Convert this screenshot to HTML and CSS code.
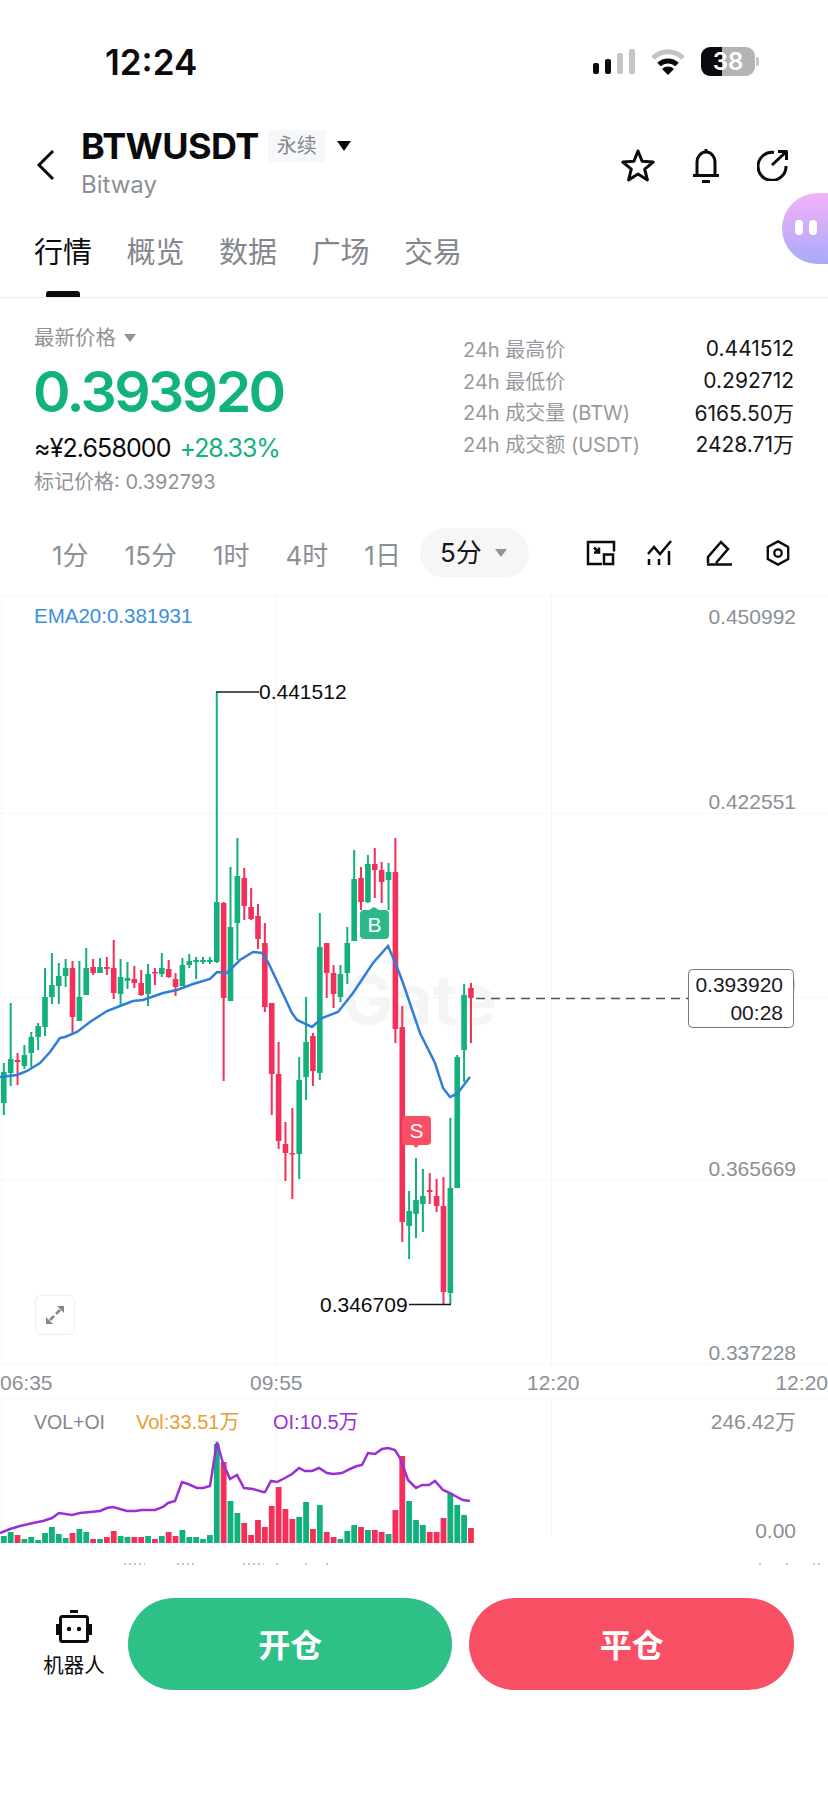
FILE: index.html
```html
<!DOCTYPE html>
<html lang="zh-CN">
<head>
    <meta charset="UTF-8">
    <meta name="viewport" content="width=device-width, initial-scale=1.0">
    <title>BTWUSDT 永续</title>
    <link rel="stylesheet" href="styles.css">
</head>
<body>
    <div class="page">
        <div class="status-bar">
            <span class="clock">12:24</span>
            <div class="status-icons">
                <div class="signal">
                    <i class="bar-1"></i><i class="bar-2"></i><i class="bar-3"></i><i class="bar-4"></i>
                </div>
                <svg class="wifi" viewBox="0 0 34 27">
                    <path class="wifi-off" d="M2 10A21 21 0 0 1 32 10"/>
                    <path class="wifi-on" d="M8 16.5A13 13 0 0 1 26 16.5"/>
                    <path class="wifi-dot" d="M17 27L11 21A8.5 8.5 0 0 1 23 21Z"/>
                </svg>
                <div class="battery">38</div>
            </div>
        </div>

        <div class="nav">
            <svg class="back" viewBox="0 0 20 32"><path d="M17 2L3 16L17 30"/></svg>
            <div class="pair">
                <div class="pair-top">
                    <span class="pair-name">BTWUSDT</span>
                    <span class="pair-tag">永续</span>
                    <span class="pair-caret"></span>
                </div>
                <div class="pair-sub">Bitway</div>
            </div>
            <div class="nav-icons">
                <svg class="nav-star" viewBox="0 0 34 33"><polygon points="17,2 21.1,12.3 32.2,13.1 23.7,20.2 26.4,30.9 17,25 7.6,30.9 10.3,20.2 1.8,13.1 12.9,12.3"/></svg>
                <svg class="nav-bell" viewBox="0 0 28 35"><path d="M5 27V14a9 10 0 0 1 18 0V27M1 27.5H27M14 1V4M10 33.5H18"/></svg>
                <svg class="nav-share" viewBox="0 0 32 32"><path d="M17 3.500A14 14 0 1 0 29 17M15 16L29 3M21 2.500H29.500V11"/></svg>
            </div>
        </div>

        <div class="tabs">
            <span class="tab active">行情</span>
            <span class="tab">概览</span>
            <span class="tab">数据</span>
            <span class="tab">广场</span>
            <span class="tab">交易</span>
        </div>
        <div class="blob"><i></i><i></i></div>

        <div class="stats">
            <div class="stats-left">
                <div class="price-label">最新价格<span class="caret-small"></span></div>
                <div class="price-big">0.393920</div>
                <div class="price-row">≈¥2.658000<span class="price-change">+28.33%</span></div>
                <div class="price-mark">标记价格: 0.392793</div>
            </div>
            <div class="stats-right">
                <div class="stat-row"><span>24h 最高价</span><b>0.441512</b></div>
                <div class="stat-row"><span>24h 最低价</span><b>0.292712</b></div>
                <div class="stat-row"><span>24h 成交量 (BTW)</span><b>6165.50万</b></div>
                <div class="stat-row"><span>24h 成交额 (USDT)</span><b>2428.71万</b></div>
            </div>
        </div>

        <div class="intervals">
            <span class="interval">1分</span>
            <span class="interval">15分</span>
            <span class="interval">1时</span>
            <span class="interval">4时</span>
            <span class="interval">1日</span>
            <span class="interval-pill">5分<span class="caret-small"></span></span>
            <div class="tools">
                <svg viewBox="0 0 30 25"><path d="M16 23.500H2V1.500H28V11M8 7L13 12M13 7V12H8"/><rect x="18" y="14" width="9" height="9.500"/></svg>
                <svg viewBox="0 0 30 26"><path d="M3 14L9 7L15 14L26 1M4 19V25M14 19V25M24 11V25"/></svg>
                <svg viewBox="0 0 30 26"><path d="M4 23V17L17 2L24 9L12 23M3 24.500H28"/></svg>
                <svg viewBox="0 0 30 28"><polygon points="15,1.500 26,7.500 26,20.500 15,26.500 4,20.500 4,7.500"/><circle cx="15" cy="14" r="4"/></svg>
            </div>
        </div>

        <div class="chart">
            <svg class="chart-svg" viewBox="0 595 828 770">
                <path class="grid" d="M0 595.500H828M0 813.500H828M0 997.500H828M0 1180.500H828M0 1364.500H828M1.500 595V1365M275.500 595V1365M551.500 595V1365"/>
                <text class="watermark" x="342" y="1024">Gate</text>
                <text class="label-ema" x="34" y="623">EMA20:0.381931</text>
                <text class="label-axis" x="796" y="624">0.450992</text>
                <text class="label-axis" x="796" y="809">0.422551</text>
                <text class="label-ghost" x="796" y="992">0</text>
                <text class="label-axis" x="796" y="1176">0.365669</text>
                <text class="label-axis" x="796" y="1360">0.337228</text>
                <g id="candles"></g>
                <polyline class="ema" points="0,1077 17,1075 27,1071 40,1063 50,1052 60,1038 65,1037 77,1032 90,1022 107,1011 120,1006 133,1001 143,1000 163,993 177,990 193,984 210,979 217,972 227,973 240,960 253,952 262,953 268,962 292,1013 297,1020 312,1027 322,1018 338,1012 353,993 373,963 388,946 397,967 403,983 420,1033 435,1063 443,1088 450,1097 457,1094 470,1077"/>
                <path class="leader" d="M216 692H259M409 1304.500H451"/>
                <text class="label-extreme" x="259" y="699">0.441512</text>
                <text class="label-extreme" x="320" y="1312">0.346709</text>
                <path class="badge-buy" d="M364 910H369L374 907L379 910H385Q389 910 389 914V935Q389 939 385 939H364Q360 939 360 935V914Q360 910 364 910Z"/>
                <text class="badge-text" x="374.500" y="932">B</text>
                <path class="badge-sell" d="M406 1116H427Q431 1116 431 1120V1141Q431 1145 427 1145H419L416 1148L413 1145H406Q402 1145 402 1141V1120Q402 1116 406 1116Z"/>
                <text class="badge-text" x="416.500" y="1138">S</text>
                <path class="price-line" d="M476 998.500H688"/>
                <rect class="price-box" x="688.500" y="969.500" width="105" height="58" rx="4"/>
                <text class="label-box" x="783" y="992">0.393920</text>
                <text class="label-box" x="783" y="1020">00:28</text>
            </svg>
            <div class="fullscreen">
                <svg viewBox="0 0 20 20"><path class="fs-head" d="M12 1H19V8ZM1 12V19H8Z"/><path class="fs-line" d="M15 5L11 9M5 15L9 11"/></svg>
            </div>
        </div>

        <div class="times">
            <span>06:35</span><span>09:55</span><span>12:20</span><span>12:20</span>
        </div>

        <div class="volume">
            <svg class="volume-svg" viewBox="0 1398 828 167">
                <path class="grid" d="M0 1398.500H828M1.500 1398V1535M275.500 1398V1535M551.500 1398V1535"/>
                <text class="label-vol" x="34" y="1429">VOL+OI</text>
                <text class="label-orange" x="136" y="1429">Vol:33.51万</text>
                <text class="label-purple" x="273" y="1429">OI:10.5万</text>
                <text class="label-axis" x="796" y="1429">246.42万</text>
                <text class="label-axis" x="796" y="1538">0.00</text>
                <g id="bars"></g>
                <polyline class="oi" points="0,1533 10,1529 20,1526 33,1523 43,1521 52,1518 59,1513 72,1515 80,1513 90,1512 100,1511 107,1508 113,1507 127,1511 135,1511 142,1510 155,1510 163,1507 168,1503 175,1501 182,1482 188,1484 197,1488 203,1488 210,1486 217,1442 223,1463 230,1479 237,1475 244,1488 253,1489 263,1492 265,1492 271,1481 277,1482 285,1478 292,1474 299,1468 305,1471 312,1471 319,1468 327,1473 333,1474 342,1473 350,1469 357,1466 362,1465 368,1453 375,1454 382,1449 388,1448 395,1450 400,1458 408,1480 416,1488 422,1485 429,1485 435,1481 443,1490 450,1493 457,1497 463,1500 470,1501"/>
                <!-- tops of the row hidden behind the action bar -->
                <path class="cut-row" d="M124 1564H145M177 1564H195M243 1564H264M276 1564H279M305 1564H308M326 1564H329M759 1564H762M786 1564H789M813 1564H821"/>
            </svg>
        </div>

        <div class="actions">
            <div class="robot">
                <svg viewBox="0 0 36 33">
                    <rect class="robot-fill" x="14" y="0" width="8" height="3"/>
                    <rect class="robot-body" x="4.500" y="6.500" width="27" height="25" rx="2"/>
                    <rect class="robot-fill" x="0" y="14" width="3" height="11"/>
                    <rect class="robot-fill" x="33" y="14" width="3" height="11"/>
                    <circle class="robot-fill" cx="13" cy="19" r="2.200"/>
                    <circle class="robot-fill" cx="23" cy="19" r="2.200"/>
                </svg>
                <span>机器人</span>
            </div>
            <button class="btn btn-open">开仓</button>
            <button class="btn btn-close">平仓</button>
        </div>
    </div>
    <script src="chart.js"></script>
</body>
</html>
```

FILE: styles.css
```css
* {
    margin: 0;
    padding: 0;
    box-sizing: border-box;
}

body {
    font-family: Inter, 'Noto Sans CJK SC', sans-serif;
    background: white;
    color: #0b0b0d;
}

.page {
    position: relative;
    width: 828px;
    height: 1796px;
    overflow: hidden;
}

/* status bar */
.status-bar {
    height: 120px;
    padding: 42px 73px 0 105px;
    display: flex;
    justify-content: space-between;
    align-items: flex-start;
}

.clock {
    font-size: 35px;
    line-height: 40px;
    font-weight: 600;
}

.status-icons {
    display: flex;
    align-items: center;
    gap: 16px;
    margin-top: 5px;
}

.signal {
    display: flex;
    align-items: flex-end;
    gap: 6px;
    height: 25px;
}

.signal i {
    width: 6px;
    border-radius: 2px;
    background: #0b0b0d;
}

.signal .bar-1 { height: 11px; }
.signal .bar-2 { height: 15px; }
.signal .bar-3 { height: 21px; background: #c4c4c4; }
.signal .bar-4 { height: 25px; background: #c4c4c4; }

.wifi {
    width: 34px;
    height: 27px;
}

.wifi-off, .wifi-on {
    fill: none;
    stroke-width: 5;
}

.wifi-off { stroke: #c4c4c4; }
.wifi-on { stroke: #0b0b0d; }
.wifi-dot { fill: #0b0b0d; }

.battery {
    position: relative;
    width: 54px;
    height: 29px;
    border-radius: 9px;
    background: linear-gradient(90deg, #0b0b0d 39%, #b4b4b4 39%);
    color: white;
    font-size: 24px;
    font-weight: 600;
    line-height: 29px;
    text-align: center;
}

.battery::after {
    content: '';
    position: absolute;
    right: -4px;
    top: 10px;
    width: 3px;
    height: 9px;
    border-radius: 0 2px 2px 0;
    background: #c4c4c4;
}

/* nav */
.nav {
    height: 90px;
    padding: 0 39px 0 36px;
    display: flex;
    align-items: center;
}

.back {
    width: 20px;
    height: 32px;
}

.back path {
    fill: none;
    stroke: #0b0b0d;
    stroke-width: 3;
}

.pair {
    margin-left: 25px;
    padding-bottom: 8px;
}

.pair-top {
    display: flex;
    align-items: center;
    height: 48px;
}

.pair-name {
    font-size: 36px;
    font-weight: 700;
    letter-spacing: -0.6px;
    line-height: 48px;
}

.pair-tag {
    margin-left: 9px;
    width: 58px;
    height: 32px;
    background: #f6f7f8;
    border-radius: 3px;
    color: #82878e;
    font-size: 20px;
    line-height: 32px;
    text-align: center;
}

.pair-caret {
    margin-left: 11px;
    width: 0;
    height: 0;
    border-left: 7.5px solid transparent;
    border-right: 7.5px solid transparent;
    border-top: 10px solid #0b0b0d;
}

.pair-sub {
    color: #8b9096;
    font-size: 24px;
    line-height: 30px;
}

.nav-icons {
    margin-left: auto;
    display: flex;
    align-items: center;
    gap: 37px;
}

.nav-icons svg {
    fill: none;
    stroke: #0b0b0d;
    stroke-width: 3;
    stroke-linejoin: round;
}

.nav-star { width: 34px; height: 33px; }
.nav-bell { width: 28px; height: 35px; }
.nav-share { width: 32px; height: 32px; }

/* tabs */
.tabs {
    height: 88px;
    padding: 24px 0 0 34px;
    display: flex;
    gap: 34.500px;
    border-bottom: 1.500px solid #eeeeee;
}

.tab {
    position: relative;
    font-size: 29px;
    line-height: 38px;
    height: 38px;
    color: #83878d;
}

.tab.active {
    color: #0b0b0d;
}

.tab.active::after {
    content: '';
    position: absolute;
    left: 12px;
    right: 12px;
    top: 57px;
    height: 6px;
    border-radius: 3px 3px 0 0;
    background: #0b0b0d;
}

.blob {
    position: absolute;
    left: 782px;
    top: 193px;
    width: 80px;
    height: 71px;
    border-radius: 36px;
    background: linear-gradient(180deg, #f3b2f6 0%, #a9a9fb 100%);
    display: flex;
    gap: 6px;
    padding: 27px 0 0 13px;
}

.blob i {
    width: 8px;
    height: 15px;
    border-radius: 4px;
    background: white;
}

/* price block */
.stats {
    height: 230px;
    padding: 26px 34px 0;
    display: flex;
    justify-content: space-between;
}

.stats-left {
    width: 300px;
}

.price-label {
    height: 28px;
    color: #8f9399;
    font-size: 20.500px;
    line-height: 28px;
    display: flex;
    align-items: center;
}

.caret-small {
    display: inline-block;
    margin-left: 8px;
    width: 0;
    height: 0;
    border-left: 6px solid transparent;
    border-right: 6px solid transparent;
    border-top: 8px solid #8f9399;
}

.price-big {
    margin-top: 6px;
    margin-left: -1px;
    color: #12b27d;
    font-size: 57px;
    font-weight: 600;
    line-height: 68px;
    letter-spacing: -2.6px;
}

.price-row {
    margin-top: 6px;
    font-size: 25px;
    line-height: 32px;
    letter-spacing: -0.9px;
}

.price-change {
    margin-left: 9px;
    color: #12b27d;
    letter-spacing: -1.1px;
}

.price-mark {
    margin-top: 1px;
    color: #8f9399;
    font-size: 20px;
    line-height: 34px;
}

.stats-right {
    width: 331px;
    padding-top: 9px;
}

.stat-row {
    height: 31.500px;
    display: flex;
    justify-content: space-between;
    align-items: center;
    color: #969aa0;
    font-size: 20px;
}

.stat-row b {
    color: #16161a;
    font-size: 21px;
    font-weight: 400;
}

/* interval row */
.intervals {
    height: 50px;
    padding: 0 35px 0 52px;
    display: flex;
    align-items: center;
    gap: 36px;
    color: #8b9096;
    font-size: 26px;
}

.interval-pill {
    margin-left: -17px;
    width: 109px;
    height: 50px;
    padding-left: 20px;
    background: #f6f6f7;
    border-radius: 25px;
    color: #16161a;
    display: flex;
    align-items: center;
    line-height: 50px;
}

.interval-pill .caret-small {
    margin-left: 13px;
}

.tools {
    margin-left: auto;
    display: flex;
    gap: 29px;
}

.tools svg {
    width: 30px;
    height: 26px;
    fill: none;
    stroke: #0b0b0d;
    stroke-width: 2.500;
}

/* main chart */
.chart {
    position: relative;
    margin-top: 17px;
    height: 770px;
}

.chart-svg, .volume-svg {
    display: block;
    width: 828px;
    height: 100%;
}

.grid {
    fill: none;
    stroke: #f6f6f6;
    stroke-width: 1;
}

text {
    font-family: 'Liberation Sans', 'Noto Sans CJK SC', sans-serif;
    font-size: 21px;
}

text.watermark {
    fill: #f5f5f6;
    font-family: Inter, sans-serif;
    font-size: 68px;
    font-weight: 700;
}

text.label-ema {
    fill: #3a8fe0;
    font-size: 20.500px;
}

.label-axis {
    fill: #8b8f96;
    text-anchor: end;
}

.label-ghost {
    fill: #cfcfcf;
    text-anchor: end;
}

.label-extreme {
    fill: #0b0b0d;
}

.label-box {
    fill: #1a1a1e;
    text-anchor: end;
}

.up { fill: #12b07c; }
.down { fill: #f42f5a; }

.ema {
    fill: none;
    stroke: #2f7fd8;
    stroke-width: 2.500;
}

.oi {
    fill: none;
    stroke: #9a2fd6;
    stroke-width: 2.500;
}

.leader {
    fill: none;
    stroke: #1a1a1e;
    stroke-width: 1.500;
}

.badge-buy { fill: #2cb98a; }
.badge-sell { fill: #f84f64; }

text.badge-text {
    fill: white;
    font-size: 21px;
    text-anchor: middle;
}

.price-line {
    fill: none;
    stroke: #555555;
    stroke-width: 1.500;
    stroke-dasharray: 9 6;
}

.price-box {
    fill: white;
    stroke: #777777;
    stroke-width: 1;
}

.fullscreen {
    position: absolute;
    left: 35px;
    top: 700px;
    width: 40px;
    height: 40px;
    padding: 9px;
    border: 1.500px solid #eeeeee;
    border-radius: 6px;
    background: white;
}

.fullscreen svg {
    display: block;
    width: 100%;
    height: 100%;
}

.fs-head { fill: #85888e; }
.fs-line { fill: none; stroke: #85888e; stroke-width: 2.500; }

/* time axis */
.times {
    height: 33px;
    display: grid;
    grid-template-columns: 250px 277px 1fr auto;
    color: #8b8f96;
    font-family: 'Liberation Sans', sans-serif;
    font-size: 21px;
    line-height: 36px;
}

/* volume chart */
.volume {
    height: 167px;
}

text.label-vol { fill: #85888e; font-size: 19.500px; }
text.label-orange { fill: #e8a030; font-size: 20px; }
text.label-purple { fill: #9a2fd6; font-size: 20px; }

.cut-row {
    fill: none;
    stroke: #c4c4c4;
    stroke-width: 2;
    stroke-dasharray: 2 3;
}

/* bottom actions */
.actions {
    padding: 33px 34px 0 37px;
    display: flex;
    align-items: flex-start;
    gap: 17px;
}

.robot {
    width: 74px;
    padding-top: 12px;
    display: flex;
    flex-direction: column;
    align-items: center;
    font-size: 20.500px;
    line-height: 32px;
    gap: 7px;
}

.robot svg {
    width: 36px;
    height: 33px;
}

.robot-fill { fill: #0b0b0d; }

.robot-body {
    fill: none;
    stroke: #0b0b0d;
    stroke-width: 3;
}

.btn {
    width: 325px;
    height: 92px;
    padding-bottom: 2px;
    border: none;
    border-radius: 46px;
    color: white;
    font-family: inherit;
    font-size: 32px;
    font-weight: 700;
}

.btn-open { background: #2dc087; }
.btn-close { background: #f84f64; }
```

FILE: chart.js
```js
const SVG_NS = 'http://www.w3.org/2000/svg';

// [rising, wick top, body top, body bottom, wick bottom]
const candles = [
    [1,1063,1072,1103,1115],[1,1003,1059,1073,1086],[0,1053,1060,1062,1085],[1,1045,1055,1066,1069],
    [1,1032,1037,1053,1067],[1,1023,1026,1037,1050],[1,968,997,1027,1036],[1,953,985,997,1004],
    [1,963,976,986,1004],[1,959,968,976,987],[0,961,968,1017,1033],[1,961,997,1021,1021],
    [1,948,968,995,995],[0,959,967,973,975],[1,958,967,973,973],[0,957,967,969,975],
    [0,940,968,993,999],[1,959,977,994,1005],[1,962,978,981,989],[0,966,979,983,988],
    [0,970,983,995,996],[1,964,974,994,1006],[0,968,972,973,985],[1,953,968,974,977],
    [0,960,969,977,978],[0,973,979,987,996],[1,958,965,986,986],[1,954,961,965,968],
    [1,957,960,962,979],[1,957,960,962,964],[1,957,960,962,964],[1,692,902,962,963],
    [0,902,903,998,1081],[1,867,927,1001,1001],[1,838,876,923,960],[0,868,878,906,920],
    [0,888,907,919,920],[0,904,916,939,949],[0,923,943,1007,1012],[0,1003,1003,1074,1115],
    [0,1042,1074,1141,1149],[0,1122,1144,1153,1181],[0,1108,1153,1154,1199],[1,1057,1080,1154,1179],
    [1,997,1042,1077,1100],[0,1033,1036,1071,1086],[1,913,947,1073,1080],[0,943,943,973,998],
    [0,965,973,994,1008],[1,965,974,997,1002],[1,927,943,973,984],[1,850,879,941,941],
    [0,867,878,902,910],[1,855,864,902,903],[0,848,864,870,898],[0,862,870,882,903],
    [1,863,872,880,910],[0,838,872,1029,1043],[0,1006,1027,1222,1242],[1,1191,1211,1226,1259],
    [1,1158,1200,1214,1238],[1,1169,1196,1204,1232],[0,1173,1190,1192,1204],[0,1179,1196,1206,1212],
    [0,1177,1206,1292,1304],[1,1118,1188,1293,1304],[1,1055,1057,1188,1188],[1,984,995,1050,1082],
    [0,983,988,998,1043]
];

// bar tops, same order as the candles
const volumes = [
    1536,1532,1535,1539,1537,1540,1533,1527,1534,1538,1533,1529,1532,1539,1539,1537,1531,1536,
    1537,1537,1537,1536,1539,1536,1532,1536,1530,1537,1537,1539,1535,1444,1462,1501,1513,1523,
    1535,1520,1527,1506,1487,1509,1519,1517,1502,1529,1505,1532,1537,1539,1531,1525,1527,1530,
    1530,1532,1534,1510,1456,1501,1520,1525,1532,1532,1518,1493,1505,1515,1528
];

const BAR_BASE = 1543;

function xAt(i) {
    return 3.8 + 6.87 * i;
}

function addRect(parent, cls, x, y, w, h) {
    const rect = document.createElementNS(SVG_NS, 'rect');
    rect.setAttribute('class', cls);
    rect.setAttribute('x', x);
    rect.setAttribute('y', y);
    rect.setAttribute('width', w);
    rect.setAttribute('height', h);
    parent.appendChild(rect);
}

const candleGroup = document.getElementById('candles');
candles.forEach((c, i) => {
    const cls = c[0] ? 'up' : 'down';
    const x = xAt(i);
    addRect(candleGroup, cls, x - 1, c[1], 2, c[4] - c[1]);
    addRect(candleGroup, cls, x - 2.8, c[2], 5.6, Math.max(c[3] - c[2], 1.5));
});

const barGroup = document.getElementById('bars');
volumes.forEach((top, i) => {
    addRect(barGroup, candles[i][0] ? 'up' : 'down', xAt(i) - 2.9, top, 5.8, BAR_BASE - top);
});
```
